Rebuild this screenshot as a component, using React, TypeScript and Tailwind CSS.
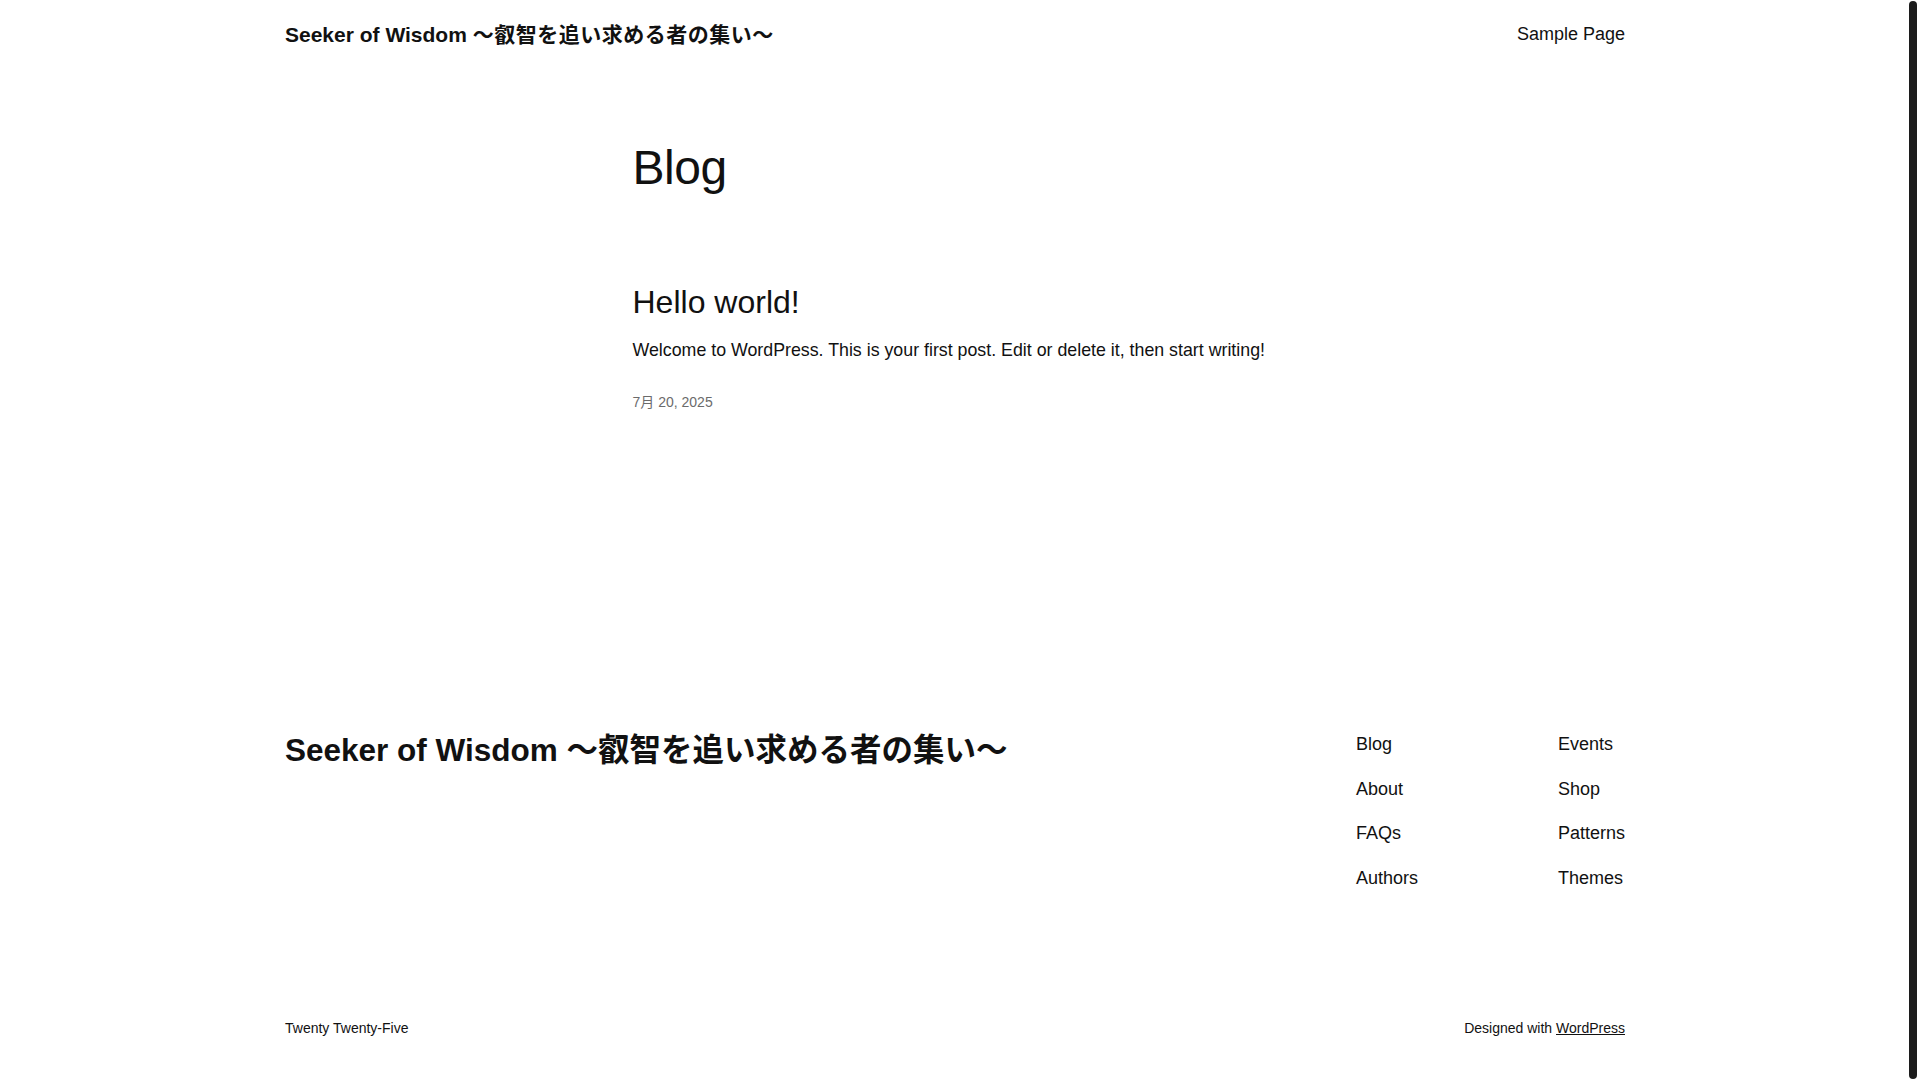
const font = {
  fontFamily: '"Liberation Sans", Arial, "Noto Sans CJK JP", sans-serif',
};

const footerNav = [
  ["Blog", "About", "FAQs", "Authors"],
  ["Events", "Shop", "Patterns", "Themes"],
];

function Header() {
  return (
    <header className="mx-auto flex h-[69px] w-[1340px] items-center justify-between">
      <a href="#" className="text-[21px] font-bold leading-[1.4] text-[#111111]">
        Seeker of Wisdom{" "}
        <span className="tracking-[0.5px]">～叡智を追い求める者の集い～</span>
      </a>
      <nav>
        <a href="#" className="text-[18px] leading-[1.5] text-[#111111]">
          Sample Page
        </a>
      </nav>
    </header>
  );
}

function Post() {
  return (
    <article className="mt-[86px] flex flex-col">
      <h2 className="text-[32px] font-normal leading-[1.2] text-[#111111]">
        <a href="#">Hello world!</a>
      </h2>
      <p className="mt-[15px] text-[17.8px] leading-[1.6] text-[#111111]">
        Welcome to WordPress. This is your first post. Edit or delete it, then
        start writing!
      </p>
      <time className="mt-[29px] text-[14px] leading-[1.4] text-[#6b6b6b]">
        7月 20, 2025
      </time>
    </article>
  );
}

function Footer() {
  return (
    <footer className="mx-auto mt-[318px] w-[1340px] pb-[63px]">
      <div className="flex items-start justify-between">
        <a href="#" className="mt-[1px] text-[31.5px] font-bold leading-[1.2] text-[#111111]">
          Seeker of Wisdom ～叡智を追い求める者の集い～
        </a>
        <div className="flex">
          {footerNav.map((col, i) => (
            <ul
              key={i}
              className={i === 0 ? "flex w-[202px] flex-col gap-[17.5px]" : "flex flex-col gap-[17.5px]"}
            >
              {col.map((item) => (
                <li key={item} className="text-[18px] leading-[27px] text-[#111111]">
                  <a href="#">{item}</a>
                </li>
              ))}
            </ul>
          ))}
        </div>
      </div>
      <div className="mt-[127px] flex items-center justify-between text-[14px] leading-[1.4] text-[#111111]">
        <p>Twenty Twenty-Five</p>
        <p>
          Designed with{" "}
          <a href="#" className="underline">
            WordPress
          </a>
        </p>
      </div>
    </footer>
  );
}

function Scrollbar() {
  // the browser scrollbar seen at the right edge of the page
  return (
    <div className="fixed right-0 top-0 flex h-screen w-[15px] justify-center bg-white py-[1px]">
      <div className="h-full w-[8px] rounded-full bg-[#1c1c1c]" />
    </div>
  );
}

export default function App() {
  return (
    <div className="min-h-screen bg-white text-[#111111]" style={font}>
      <div className="ml-[5px] mr-[15px]">
        <Header />
        <main className="mx-auto w-[645px] pt-[70px]">
          <h1 className="text-[48px] font-normal leading-[1.2] tracking-[-0.5px] text-[#111111]">
            Blog
          </h1>
          <Post />
        </main>
        <Footer />
      </div>
      <Scrollbar />
    </div>
  );
}
